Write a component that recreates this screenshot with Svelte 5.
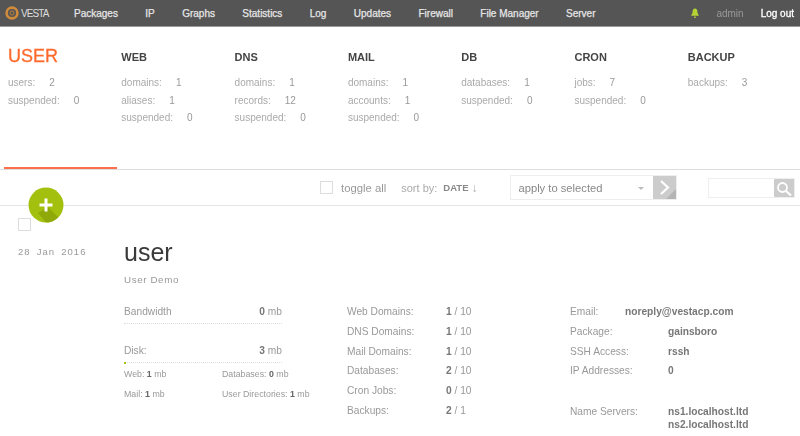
<script>
  const nav = ['Packages','IP','Graphs','Statistics','Log','Updates','Firewall','File Manager','Server'];
  const tabs = [
    {t:'USER',rows:[['users:','2'],['suspended:','0']],on:true},
    {t:'WEB',rows:[['domains:','1'],['aliases:','1'],['suspended:','0']]},
    {t:'DNS',rows:[['domains:','1'],['records:','12'],['suspended:','0']]},
    {t:'MAIL',rows:[['domains:','1'],['accounts:','1'],['suspended:','0']]},
    {t:'DB',rows:[['databases:','1'],['suspended:','0']]},
    {t:'CRON',rows:[['jobs:','7'],['suspended:','0']]},
    {t:'BACKUP',rows:[['backups:','3']]}
  ];
  const limits = [['Web Domains:','1','10'],['DNS Domains:','1','10'],['Mail Domains:','1','10'],['Databases:','2','10'],['Cron Jobs:','0','10'],['Backups:','2','1']];
</script>

<div class="page">
  <header>
    <div class="logo">
      <svg width="14" height="14" viewBox="0 0 14 14"><circle cx="7" cy="7" r="5.400" fill="none" stroke="#d08a3c" stroke-width="2.600"/><circle cx="7" cy="7" r="2" fill="none" stroke="#b8803c" stroke-width="1"/></svg>
      <span>VESTA</span>
    </div>
    <nav>{#each nav as n}<span>{n}</span>{/each}</nav>
    <div class="right">
      <svg width="8" height="10" viewBox="0 0 8 10"><path d="M4 0.5c1.8 0 2.4 1.5 2.4 3 0 1.700 0.600 2.600 1.300 3.500v0.800H0.300V7c0.700-0.900 1.300-1.800 1.300-3.500 0-1.500 0.600-3 2.400-3z" fill="#b5d334"/><rect x="3" y="8.600" width="2" height="1.200" fill="#b5d334"/></svg>
      <span class="admin">admin</span>
      <span class="logout">Log out</span>
    </div>
  </header>

  <section class="tabs">
    {#each tabs as tab}
      <div class="tab" class:on={tab.on}>
        <h2>{tab.t}</h2>
        {#each tab.rows as r}<div class="trow"><span>{r[0]}</span><span class="v">{r[1]}</span></div>{/each}
      </div>
    {/each}
  </section>

  <section class="toolbar">
    <div class="add">
      <svg width="36" height="36" viewBox="0 0 36 36"><defs><clipPath id="c"><circle cx="18" cy="18" r="17.500"/></clipPath></defs><circle cx="18" cy="18" r="17.500" fill="#a4c00e"/><path d="M20 20L38 38H20L10 26z" fill="#8fa80a" clip-path="url(#c)"/><path d="M16.500 11.500h3v5h5v3h-5v5h-3v-5h-5v-3h5z" fill="#fff"/></svg>
    </div>
    <span class="box"></span>
    <span class="toggle">toggle all</span>
    <span class="sort">sort by:</span>
    <b class="date">DATE</b>
    <span class="arrow">↓</span>
    <div class="apply">
      <span class="sel">apply to selected</span>
      <span class="caret"></span>
      <span class="go"><svg width="23" height="23" viewBox="0 0 23 23"><path d="M13 23L23 13V23z" fill="#b4b4b4"/><path d="M8 5l7 6.500-7 6.500" fill="none" stroke="#fff" stroke-width="2.200"/></svg></span>
    </div>
    <div class="search">
      <span class="field"></span>
      <span class="mag"><svg width="20" height="19" viewBox="0 0 20 19"><circle cx="8.500" cy="8.500" r="4.500" fill="none" stroke="#fff" stroke-width="1.800"/><path d="M12 12l5 4.500" stroke="#fff" stroke-width="2.200"/></svg></span>
    </div>
  </section>

  <section class="main">
    <div class="left">
      <span class="box"></span>
      <div class="when"><span>28</span><span>Jan</span><span>2016</span></div>
    </div>
    <div class="body">
      <h1>user</h1>
      <div class="demo">User Demo</div>
      <div class="cols">
        <div class="c1">
          <div class="usage"><span>Bandwidth</span><span><b>0</b> mb</span></div>
          <div class="bar"></div>
          <div class="usage disk"><span>Disk:</span><span><b>3</b> mb</span></div>
          <div class="bar"><i></i></div>
          <div class="sub"><span>Web: <b>1</b> mb</span><span class="s2">Databases: <b>0</b> mb</span></div>
          <div class="sub"><span>Mail: <b>1</b> mb</span><span class="s2">User Directories: <b>1</b> mb</span></div>
        </div>
        <div class="c2">
          {#each limits as l}<div class="lrow"><span>{l[0]}</span><span><b>{l[1]}</b> / {l[2]}</span></div>{/each}
        </div>
        <div class="c3">
          <div class="irow"><span class="email">Email:</span><b>noreply@vestacp.com</b></div>
          <div class="irow"><span>Package:</span><b>gainsboro</b></div>
          <div class="irow"><span>SSH Access:</span><b>rssh</b></div>
          <div class="irow"><span>IP Addresses:</span><b>0</b></div>
          <div class="irow ns"><span>Name Servers:</span><b>ns1.localhost.ltd<br>ns2.localhost.ltd</b></div>
        </div>
      </div>
    </div>
  </section>
</div>

<style>
  :global(body){margin:0;background:#fff}
  .page{width:800px;height:436px;overflow:hidden;font-family:"Liberation Sans",Arial,sans-serif;color:#8f8f8f;font-size:11px;filter:blur(.45px)}
  header{height:26px;background:#555;border-bottom:1px solid #999;display:flex;align-items:center;box-sizing:content-box}
  .logo{display:flex;align-items:center;gap:2px;width:74px;padding-left:5px;box-sizing:border-box;color:#ddd;font-size:10px;letter-spacing:-.9px}
  nav{display:flex;gap:27.400px;color:#e6e6e6;font-size:10px}
  nav span{-webkit-text-stroke:.25px #e6e6e6}
  .right{margin-left:auto;display:flex;align-items:center;padding-right:6px;font-size:10px}
  .admin{color:#999;margin:0 17px 0 17px}
  .logout{color:#fff;-webkit-text-stroke:.3px #fff}
  .tabs{height:142px;border-bottom:1px solid #ddd;display:flex;padding-left:4px;box-sizing:content-box}
  .tab{width:113.300px;box-sizing:border-box;padding:23px 0 0 4px;height:142px;font-size:10px}
  .tab.on{border-bottom:2px solid #fe6e4a}
  .tab h2{margin:0 0 10px;font-size:11px;line-height:14px;height:14px;color:#444;font-weight:bold}
  .tab.on h2{font-size:18px;color:#fe6a2c;font-weight:normal;-webkit-text-stroke:.3px #fe6a2c;margin-top:-1px;margin-bottom:11px}
  .trow{height:17.500px;line-height:17px;color:#aaa;display:flex;gap:14px}
  .v{color:#999}
  .toolbar{height:35px;border-bottom:1px solid #e4e4e4;position:relative;display:flex;align-items:center;font-size:11.300px;color:#999;padding-left:320px;box-sizing:content-box}
  .box{display:block;width:11px;height:11px;border:1px solid #ddd;flex:none}
  .toggle{margin-left:8px}
  .sort{margin-left:15px;color:#aaa;font-size:11px}
  .date{margin-left:6px;font-size:9.500px;color:#888}
  .arrow{margin-left:3px;font-size:12px;color:#aaa}
  .add{position:absolute;left:28px;top:17px;line-height:0;z-index:2}
  .apply{margin-left:33px;width:165px;height:23px;border:1px solid #eee;display:flex;align-items:center;position:relative;box-sizing:content-box}
  .sel{margin-left:7px;color:#888;font-size:11.200px}
  .caret{position:absolute;right:32px;top:11px;border:3px solid transparent;border-top-color:#bbb;border-bottom:0}
  .go{position:absolute;right:0;top:0;width:23px;height:23px;background:#ccc;line-height:0}
  .search{margin-left:auto;margin-right:5px;width:85px;height:18px;border:1px solid #eee;position:relative}
  .mag{position:absolute;right:0;top:0;width:20px;height:18px;background:#ccc;line-height:0}
  .main{display:flex}
  .left{width:124px;padding:12px 0 0 18px;box-sizing:border-box}
  .when{display:flex;gap:6px;margin-top:15px;font-size:9.500px;letter-spacing:1.050px;color:#999}
  .body{flex:1}
  h1{margin:32px 0 0;font-size:25px;font-weight:normal;line-height:29px;color:#3a3a3a}
  .demo{margin-top:7px;font-size:9.800px;letter-spacing:.6px;color:#999;line-height:12px}
  .cols{display:flex;margin-top:19px;font-size:10.200px}
  .c1{width:223px}
  .usage{width:158px;display:flex;justify-content:space-between;line-height:14px;color:#999}
  .usage b,.lrow b{color:#777}
  .bar{width:158px;height:0;border-top:1px dotted #ddd;margin-top:4px;position:relative}
  .bar i{position:absolute;left:0;top:-1px;width:2px;height:2px;background:#a4c00e}
  .disk{margin-top:20px}
  .sub{font-size:8.800px;line-height:14px;display:flex;margin-top:4px;color:#999}
  .sub + .sub{margin-top:6px}
  .sub b{color:#666}
  .sub span:first-child{width:98px}
  .c2{width:223px}
  .lrow{display:flex;height:19.800px;line-height:14px;color:#999}
  .lrow span:first-child{width:99px}
  .irow{display:flex;height:19.800px;line-height:14px;color:#999}
  .irow span{width:98px}
  .irow span.email{width:55px}
  .irow b{color:#777}
  .ns{margin-top:21px}
  .ns b{line-height:13px}
</style>
